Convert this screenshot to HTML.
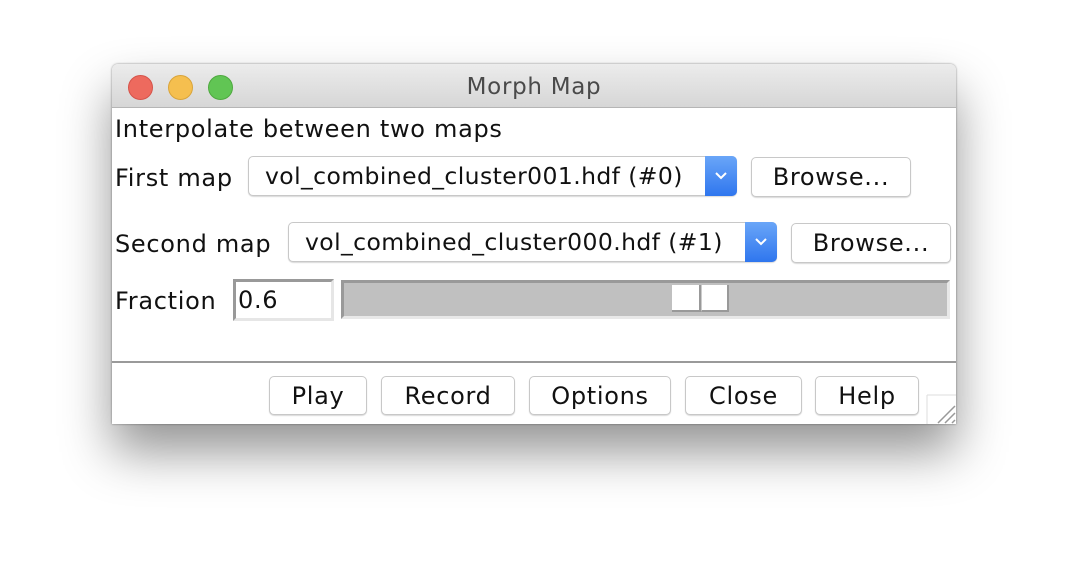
<!DOCTYPE html>
<html><head><style>
body{margin:0;width:1068px;height:584px;background:#fff;position:relative;overflow:hidden;font-family:"DejaVu Sans","Liberation Sans",sans-serif;color:#111;letter-spacing:0.7px}
.win{position:absolute;left:112px;top:64px;width:844px;height:360px;background:#fff;border-radius:6px 6px 0 0;box-shadow:0 28px 50px rgba(0,0,0,.42),0 0 2px rgba(0,0,0,.45);overflow:hidden}
.title{position:absolute;left:0;top:0;width:844px;height:43px;background:linear-gradient(#ececec,#d6d6d6);border-bottom:1px solid #b5b5b5;text-align:center;font-size:23px;line-height:46px;color:#4a4a4a}
.dot{position:absolute;top:11px;width:23px;height:23px;border-radius:50%}
.a{position:absolute;font-size:24px;white-space:nowrap}
.btn{position:absolute;background:#fff;border:1px solid #c8c8c8;border-radius:5px;box-shadow:0 1px 1px rgba(0,0,0,.15);font-size:24px;text-align:center;box-sizing:border-box}
.combo{position:absolute;background:#fff;border:1px solid #c8c8c8;border-radius:5px;box-shadow:0 1px 1px rgba(0,0,0,.15);font-size:23.5px;letter-spacing:0.4px;box-sizing:border-box;white-space:nowrap}
.arr{position:absolute;right:-1px;top:-1px;bottom:-1px;width:32px;background:linear-gradient(#6aa6f8,#2f76ee);border-radius:0 5px 5px 0}
</style></head><body>
<div class="win">
<div class="title">Morph Map
<div class="dot" style="left:16px;background:#ed6a5e;border:1px solid #d5534a"></div>
<div class="dot" style="left:56px;background:#f5bf4f;border:1px solid #d9a43a"></div>
<div class="dot" style="left:96px;background:#61c554;border:1px solid #4ea93f"></div>
</div>
<div class="a" style="left:3px;top:51px">Interpolate between two maps</div>
<div class="a" style="left:3px;top:100px">First map</div>
<div class="combo" style="left:136px;top:92px;width:489px;height:40px;padding:5px 0 0 16px">vol_combined_cluster001.hdf (#0)<div class="arr"><svg width="32" height="40" viewBox="0 0 32 40"><path d="M11 17l5 5 5-5" stroke="#fff" stroke-width="2" fill="none"/></svg></div></div>
<div class="btn" style="left:639px;top:93px;width:160px;height:40px;line-height:39px">Browse...</div>
<div class="a" style="left:3px;top:166px">Second map</div>
<div class="combo" style="left:176px;top:158px;width:489px;height:40px;padding:5px 0 0 16px">vol_combined_cluster000.hdf (#1)<div class="arr"><svg width="32" height="40" viewBox="0 0 32 40"><path d="M11 17l5 5 5-5" stroke="#fff" stroke-width="2" fill="none"/></svg></div></div>
<div class="btn" style="left:679px;top:159px;width:160px;height:40px;line-height:39px">Browse...</div>
<div class="a" style="left:3px;top:223px">Fraction</div>
<div style="position:absolute;left:121px;top:215px;width:101px;height:42px;box-sizing:border-box;border-top:3px solid #999;border-left:3px solid #999;border-right:3px solid #e6e6e6;border-bottom:3px solid #e6e6e6;font-size:24px;padding:4px 0 0 2px">0.6</div>
<div style="position:absolute;left:229px;top:216px;width:609px;height:39px;box-sizing:border-box;background:#c0c0c0;border-top:3px solid #999;border-left:3px solid #999;border-right:3px solid #e8e8e8;border-bottom:3px solid #e8e8e8">
<div style="position:absolute;left:328px;top:2px;width:29px;height:27px;background:#fff;border-right:2px solid #999;border-bottom:2px solid #999;box-sizing:border-box"></div>
<div style="position:absolute;left:357px;top:2px;width:28px;height:27px;background:#fff;border-right:2px solid #999;border-bottom:2px solid #999;border-left:1px solid #ccc;box-sizing:border-box"></div>
</div>
<div style="position:absolute;left:0;top:297px;width:844px;height:2px;background:#9a9a9a"></div>
<div class="btn" style="left:157px;top:312px;width:98px;height:39px;line-height:38px">Play</div>
<div class="btn" style="left:269px;top:312px;width:134px;height:39px;line-height:38px">Record</div>
<div class="btn" style="left:417px;top:312px;width:142px;height:39px;line-height:38px">Options</div>
<div class="btn" style="left:573px;top:312px;width:117px;height:39px;line-height:38px">Close</div>
<div class="btn" style="left:703px;top:312px;width:104px;height:39px;line-height:38px">Help</div>
<svg style="position:absolute;left:814px;top:330px" width="30" height="30"><path d="M1 1V30M1 1H30" stroke="#ddd" stroke-width="1" fill="none"/><path d="M12 29L29 12M19 29L29 19M26 29L29 26" stroke="#999" stroke-width="1.5"/></svg>
</div>
</body></html>
